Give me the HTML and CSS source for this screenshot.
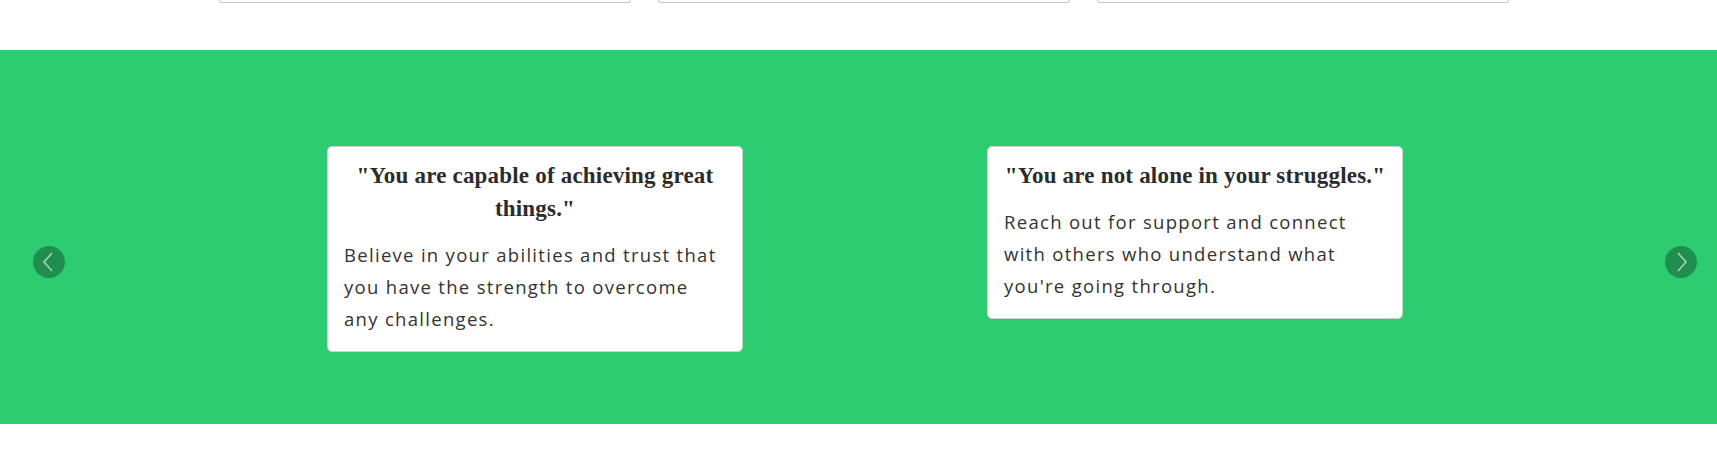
FILE: index.html
```html
<!DOCTYPE html>
<html lang="en">
<head>
<meta charset="utf-8">
<title>Affirmations</title>
<link rel="stylesheet" href="styles.css">
</head>
<body>
<div class="top-row">
  <div class="top-card"></div>
  <div class="top-card"></div>
  <div class="top-card"></div>
</div>
<section class="band">
  <button class="arrow arrow-prev" aria-label="Previous">
    <svg viewBox="0 0 32 32" width="32" height="32"><path d="M19 7 L11 16 L19 25" fill="none" stroke="currentColor" stroke-width="1.6"/></svg>
  </button>
  <div class="slides">
    <div class="slide">
      <div class="card">
        <h3 class="card-title">"You are capable of achieving great things."</h3>
        <p class="card-text">Believe in your abilities and trust that you have the strength to overcome any challenges.</p>
      </div>
    </div>
    <div class="slide">
      <div class="card">
        <h3 class="card-title">"You are not alone in your struggles."</h3>
        <p class="card-text">Reach out for support and connect with others who understand what you're going through.</p>
      </div>
    </div>
  </div>
  <button class="arrow arrow-next" aria-label="Next">
    <svg viewBox="0 0 32 32" width="32" height="32"><path d="M13 7 L21 16 L13 25" fill="none" stroke="currentColor" stroke-width="1.6"/></svg>
  </button>
</section>
</body>
</html>
```
FILE: styles.css
```css
html, body {
  margin: 0;
  padding: 0;
  background: #ffffff;
}

body {
  width: 1717px;
  height: 465px;
  overflow: hidden;
  font-family: "Open Sans", "Liberation Sans", sans-serif;
  color: #333333;
}

.top-row {
  display: flex;
  gap: 27px;
  padding-left: 219px;
  height: 3px;
}

.top-card {
  width: 410px;
  height: 2px;
  border: 1px solid #c8c8c8;
  border-top: none;
  border-radius: 0 0 4px 4px;
}

.band {
  position: relative;
  margin-top: 47px;
  height: 374px;
  background: #2ecc71;
  box-sizing: border-box;
  padding-top: 96px;
}

.slides {
  display: flex;
  margin-left: 205px;
  width: 1320px;
  align-items: flex-start;
}

.slide {
  flex: 0 0 660px;
  display: flex;
  justify-content: center;
}

.card {
  width: 416px;
  box-sizing: border-box;
  background: #ffffff;
  border: 1px solid #cfcfcf;
  border-radius: 5px;
  padding: 12px 16px 16px;
}

.card-title {
  margin: 0 0 14px;
  font-family: "Liberation Serif", "DejaVu Serif", serif;
  font-weight: 700;
  font-size: 23px;
  letter-spacing: 0.2px;
  line-height: 33px;
  text-align: center;
  color: #2b2b2b;
}

.card-text {
  margin: 0;
  font-size: 18.5px;
  letter-spacing: 1.3px;
  line-height: 32px;
  color: #333333;
}

.arrow {
  position: absolute;
  top: 196px;
  width: 32px;
  height: 32px;
  padding: 0;
  border: none;
  border-radius: 50%;
  background: rgba(0, 0, 0, 0.3);
  color: rgba(255, 255, 255, 0.6);
  display: flex;
  align-items: center;
  justify-content: center;
}

.arrow svg {
  display: block;
}

.arrow-prev {
  left: 33px;
}

.arrow-next {
  right: 20px;
}
```
